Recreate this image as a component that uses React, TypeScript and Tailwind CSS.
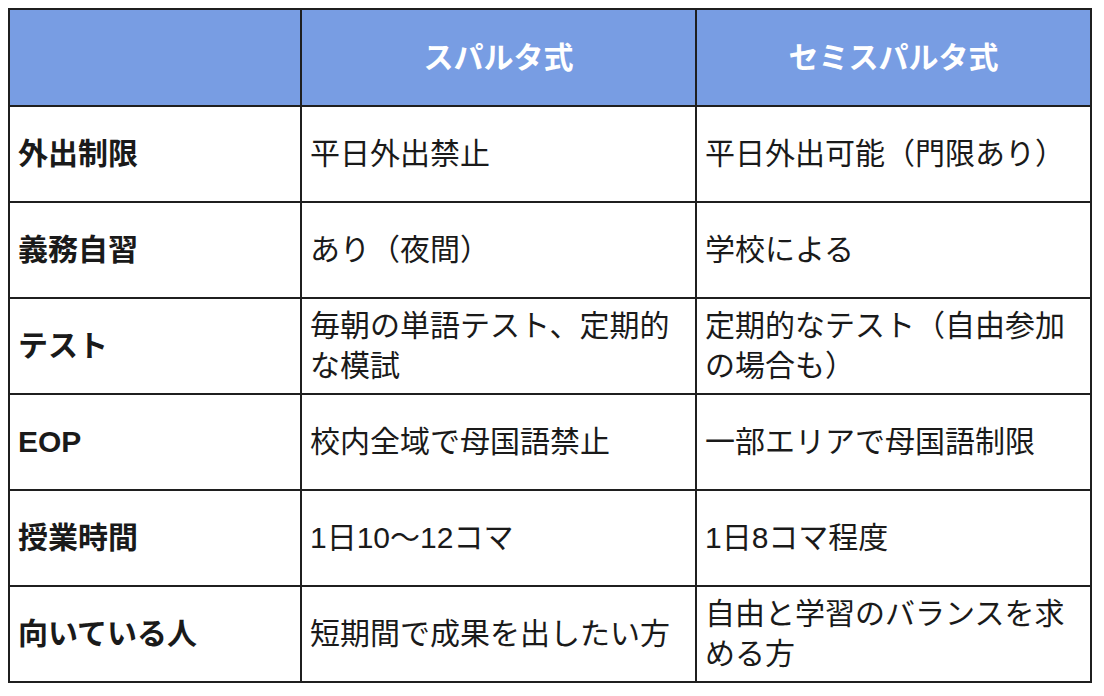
const ROWS: { label: string; sparta: string; semi: string }[] = [
  { label: '外出制限', sparta: '平日外出禁止', semi: '平日外出可能（門限あり）' },
  { label: '義務自習', sparta: 'あり（夜間）', semi: '学校による' },
  { label: 'テスト', sparta: '毎朝の単語テスト、定期的な模試', semi: '定期的なテスト（自由参加の場合も）' },
  { label: 'EOP', sparta: '校内全域で母国語禁止', semi: '一部エリアで母国語制限' },
  { label: '授業時間', sparta: '1日10〜12コマ', semi: '1日8コマ程度' },
  { label: '向いている人', sparta: '短期間で成果を出したい方', semi: '自由と学習のバランスを求める方' },
];

export default function App() {
  return (
    <div className="min-h-[696px] w-[1104px] bg-white pl-[8px] pt-[8px] font-['Liberation_Sans','Noto_Sans_CJK_JP',sans-serif] text-[#1a1a1a]">
      <table className="w-[1082px] table-fixed border-collapse">
        <colgroup>
          <col className="w-[292px]" />
          <col className="w-[395px]" />
          <col className="w-[395px]" />
        </colgroup>
        <thead>
          <tr className="h-[97px] bg-[#789de3]">
            <th className="border-2 border-[#1f1f1f]" />
            <th className="border-2 border-[#1f1f1f] text-center text-[30px] font-bold text-white">
              スパルタ式
            </th>
            <th className="border-2 border-[#1f1f1f] text-center text-[30px] font-bold text-white">
              セミスパルタ式
            </th>
          </tr>
        </thead>
        <tbody>
          {ROWS.map((row) => (
            <tr key={row.label} className="h-[96px]">
              <td className="border-2 border-[#1f1f1f] pl-[8px] pr-[8px] text-[30px] font-bold leading-[40px]">
                {row.label}
              </td>
              <td className="border-2 border-[#1f1f1f] pl-[8px] pr-[8px] text-[30px] leading-[40px]">
                {row.sparta}
              </td>
              <td className="border-2 border-[#1f1f1f] pl-[8px] pr-[8px] text-[30px] leading-[40px]">
                {row.semi}
              </td>
            </tr>
          ))}
        </tbody>
      </table>
    </div>
  );
}
